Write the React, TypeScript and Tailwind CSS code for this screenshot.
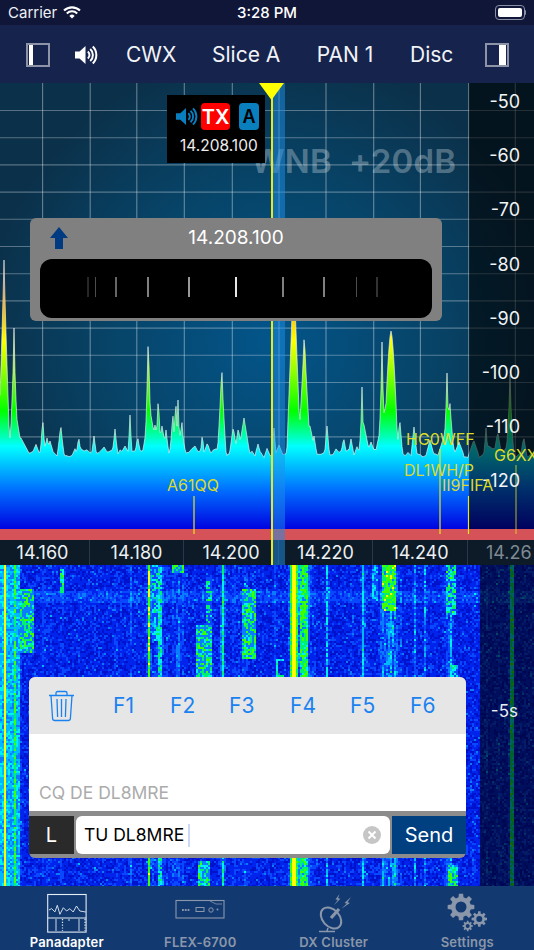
import React from "react";

const FONT = "font-['Inter','Liberation_Sans',sans-serif]";

function rng(seed: number) {
  let a = seed;
  return () => {
    a |= 0;
    a = (a + 0x6d2b79f5) | 0;
    let t = Math.imul(a ^ (a >>> 15), 1 | a);
    t = (t + Math.imul(t ^ (t >>> 7), 61 | t)) ^ t;
    return ((t ^ (t >>> 14)) >>> 0) / 4294967296;
  };
}

// x, top y, half width at the base, shape exponent
const PEAKS: number[][] = [
  [4, 260, 6, 0.9], [3, 395, 9, 1], [14, 328, 4.5, 0.7], [15, 405, 8, 0.9], [21, 438, 9, 1],
  [42.7, 417, 2.5, 0.9], [47, 438, 4, 1], [50, 441, 4, 1], [60.7, 423, 3.5, 0.8], [78.7, 437, 2.5, 1], [94, 436, 2.5, 1],
  [104, 447, 5, 1], [115, 429, 3, 0.9], [125, 446, 5, 1], [130, 415, 2, 0.9], [137.7, 437, 3, 1], [145.7, 432, 3, 1],
  [148.3, 323, 3.5, 0.7], [150, 410, 8, 1], [155, 425, 6, 1], [158.3, 394, 3, 0.8], [162, 426, 5, 1], [166, 430, 3, 1],
  [172.7, 393, 3.5, 0.4], [175.7, 388, 4, 0.5], [178, 400, 6, 0.4], [181.7, 406, 4.5, 0.4],
  [202.3, 434, 2, 1], [207.3, 443, 4, 1], [221.7, 358, 4.5, 0.7], [233.3, 427, 4, 1], [238.3, 428, 4, 1], [244, 418, 6, 1],
  [258, 444, 3, 1], [274, 428, 2, 1], [279, 445, 4, 1],
  [293.7, 270, 7, 1], [290, 377, 2.5, 1], [304.3, 329, 6.5, 0.8], [310, 426, 6, 1], [314, 436, 3, 1], [327, 426, 2.5, 1],
  [343.7, 438, 3, 1], [351, 439, 3, 1], [362, 387, 3, 0.6], [364, 425, 6, 1], [371, 442, 5, 1],
  [382, 342, 3.5, 0.7], [391, 331, 7, 1.6], [386, 405, 11, 1.1], [399.7, 419, 3, 1], [414, 427, 3, 1], [430, 440, 4, 1],
  [447, 373, 3.5, 0.7], [449.7, 397, 4.5, 0.8], [447, 427, 9, 1], [459, 442, 5, 1],
  [473.7, 440, 5, 1], [486, 428, 2, 1], [497.7, 432, 4, 1], [510, 375, 4, 0.65], [523.7, 437, 3, 1],
];

const R0 = rng(17);
const GRID: number[] = [];
for (let i = 0; i < 182; i++) {
  const j = R0();
  GRID.push(451 + Math.sin(i * 0.37) * 2 + R0() * 5 + (j > 0.8 ? 4 * R0() : 0) - (j < 0.15 ? 5 : 0));
}
const SPEC: number[] = [];
for (let x = 0; x <= 534; x++) {
  const i = Math.floor(x / 3);
  const f = x / 3 - i;
  let y = GRID[i] * (1 - f) + GRID[i + 1] * f;
  for (const [px, top, w, p] of PEAKS) {
    const d = Math.abs(x - px);
    if (d < w) y = Math.min(y, top + (455 - top) * Math.pow(d / w, p));
  }
  SPEC.push(y);
}
const specLine = SPEC.map((y, x) => `${x},${y.toFixed(1)}`).join(" L");

// [x0, x1, y0, y1, level, density]
const FEATURES: number[][] = [
  [4, 6, 565, 886, 1.02, 1], [14, 16, 565, 886, 0.8, 0.9],
  [20, 34, 588, 653, 0.76, 0.58],
  [148, 150, 565, 886, 0.88, 1], [153, 159, 565, 640, 0.65, 0.55], [159, 161, 565, 886, 0.65, 0.8],
  [172, 184, 565, 572, 0.78, 0.7], [61, 63, 568, 592, 0.72, 0.8],
  [206, 211, 578, 625, 0.72, 0.45], [197, 211, 625, 678, 0.74, 0.55],
  [198, 210, 860, 886, 0.74, 0.55],
  [222, 224, 565, 886, 0.7, 0.95],
  [243, 255, 588, 658, 0.76, 0.58],
  [276, 278, 659, 678, 0.65, 0.9], [276, 283, 659, 661, 0.65, 0.9], [276, 283, 675, 678, 0.65, 0.9],
  [291, 293, 565, 886, 0.8, 1], [293, 295, 565, 886, 1.02, 1], [295, 297, 565, 886, 0.8, 1],
  [301, 307, 565, 886, 0.78, 0.9],
  [327, 328, 565, 886, 0.6, 0.8], [362, 364, 565, 886, 0.6, 0.85], [373, 377, 565, 600, 0.58, 0.55],
  [383, 395, 565, 611, 0.82, 0.9], [414, 416, 565, 886, 0.55, 0.5], [424, 426, 565, 886, 0.55, 0.5],
  [446, 456, 565, 615, 0.72, 0.6], [450, 452, 615, 886, 0.6, 0.8], [450, 458, 665, 678, 0.62, 0.7],
  [448, 458, 865, 886, 0.75, 0.6],
  [511, 513, 565, 886, 0.72, 1],
];

const COLORS = ["#000aa8", "#0012cc", "#0024ec", "#0a48ff", "#0a7cff", "#00b8ff", "#00f0f0", "#00f070", "#40ff00", "#ffff00"];
const R1 = rng(91);
const runs: string[] = COLORS.map(() => "");
for (let yy = 0; yy < 321; yy += 2) {
  const Y = 565 + yy;
  let cur = -1;
  let start = 0;
  for (let x = 0; x <= 534; x += 2) {
    let idx = -1;
    if (x < 534) {
      let v = 0.13 + R1() * 0.2;
      const h = Math.min(1, Math.max(0, (449 - SPEC[x]) / 70));
      if (h > 0.05) {
        const t = Math.sin(Y * 0.13 + x * 1.7) + Math.sin(Y * 0.041 + x * 0.6);
        v += h * (t > -0.3 ? 0.3 : 0.08);
      }
      if (Y > 590 && Y < 602) v += 0.09;
      if (R1() < 0.05) v += 0.17;
      if (x < 20) v = Math.max(v, 0.42 + R1() * 0.24);
      for (const [x0, x1, y0, y1, lv, d] of FEATURES) {
        if (x >= x0 - 1 && x < x1 && Y >= y0 && Y < y1) v = Math.max(v, R1() < d ? lv + (R1() - 0.5) * 0.2 : lv * 0.55);
      }
      idx = Math.min(9, Math.floor(v * 10));
    }
    if (idx !== cur) {
      if (cur >= 0) runs[cur] += `M${start} ${yy}h${x - start}v2h-${x - start}z`;
      cur = idx;
      start = x;
    }
  }
}

function gear(cx: number, cy: number, ro: number, ri: number, hole: number, teeth: number) {
  const pts: string[] = [];
  for (let i = 0; i < teeth; i++) {
    const a = (i / teeth) * Math.PI * 2;
    const s = (Math.PI * 2) / teeth;
    const p = (r: number, t: number) => `${(cx + r * Math.cos(t)).toFixed(2)} ${(cy + r * Math.sin(t)).toFixed(2)}`;
    pts.push(p(ri, a - s * 0.32), p(ro, a - s * 0.2), p(ro, a + s * 0.2), p(ri, a + s * 0.32));
  }
  return `M${pts.join("L")}zM${cx + hole} ${cy}a${hole} ${hole} 0 1 0 ${-2 * hole} 0a${hole} ${hole} 0 1 0 ${2 * hole} 0z`;
}

function Speaker({ className }: { className: string }) {
  return (
    <svg viewBox="0 0 23 20" className={className} fill="none" stroke="currentColor">
      <path d="M0 6.5h4.5L10.5 1v18l-6-5.5H0z" fill="currentColor" stroke="none" />
      <path d="M12.8 6.5a4.5 4.5 0 0 1 0 7" strokeWidth="2" />
      <path d="M15.2 4a8 8 0 0 1 0 12" strokeWidth="2" />
      <path d="M17.8 1.5a12 12 0 0 1 0 17" strokeWidth="2" />
    </svg>
  );
}

function Spectrum() {
  const vlines = [42.6, 90.2, 136.8, 184.3, 232.3, 279, 326, 373.7, 420.4, 468.7, 515.3];
  const hlines = Array.from({ length: 14 }, (_, i) => 110.5 + 27.2 * i);
  return (
    <svg viewBox="0 83 534 457" className="absolute inset-0 w-full h-full">
      <defs>
        <radialGradient id="bg" gradientUnits="userSpaceOnUse" cx="270" cy="340" r="290">
          <stop offset="0" stopColor="#03558a" />
          <stop offset="0.55" stopColor="#074468" />
          <stop offset="1" stopColor="#0b3049" />
        </radialGradient>
        <linearGradient id="fill" gradientUnits="userSpaceOnUse" x1="0" y1="260" x2="0" y2="530">
          <stop offset="0" stopColor="#ff2a20" />
          <stop offset="0.14" stopColor="#ff9a00" />
          <stop offset="0.3" stopColor="#ffff00" />
          <stop offset="0.56" stopColor="#00ff00" />
          <stop offset="0.69" stopColor="#00ffff" />
          <stop offset="0.76" stopColor="#00c0ff" />
          <stop offset="0.85" stopColor="#0070ff" />
          <stop offset="1" stopColor="#0000e0" />
        </linearGradient>
      </defs>
      <rect x="0" y="83" width="534" height="457" fill="url(#bg)" />
      {vlines.map((x) => (
        <line key={x} x1={x} x2={x} y1="83" y2="530" stroke="#ffffff" strokeOpacity="0.38" strokeWidth="1.1" />
      ))}
      {hlines.map((y) => (
        <line key={y} x1="0" x2="534" y1={y} y2={y} stroke="#ffffff" strokeOpacity="0.32" strokeWidth="1.1" />
      ))}
      <path d={`M0,530 L${specLine} L534,530z`} fill="url(#fill)" />
      <path d={`M${specLine}`} fill="none" stroke="#e8f4f4" strokeOpacity="0.72" strokeWidth="0.9" />
      <rect x="0" y="529" width="534" height="11" fill="#d55358" />
      <rect x="469" y="83" width="65" height="446" fill="#000000" fillOpacity="0.58" />
      <g stroke="#e8e818" strokeWidth="1.2">
        <line x1="194" x2="194" y1="496" y2="534" />
        <line x1="440" x2="440" y1="449" y2="534" />
        <line x1="468.5" x2="468.5" y1="496" y2="534" />
        <line x1="516" x2="516" y1="465" y2="534" strokeOpacity="0.65" />
      </g>
    </svg>
  );
}

function Spot({ className, children }: { className: string; children: React.ReactNode }) {
  return <span className={`absolute text-[16px] leading-[18px] text-[#dcdc28] whitespace-nowrap ${className}`}>{children}</span>;
}

function Waterfall() {
  return (
    <svg viewBox="0 0 534 321" className="absolute inset-0 w-full h-full">
      <defs>
        <filter id="soft" x="0" y="0" width="100%" height="100%" colorInterpolationFilters="sRGB">
          <feGaussianBlur stdDeviation="0.5" />
        </filter>
      </defs>
      <rect x="0" y="0" width="534" height="321" fill="#0014d0" />
      <g filter="url(#soft)" shapeRendering="crispEdges">
        {runs.map((d, i) => (
          <path key={i} d={d} fill={COLORS[i]} />
        ))}
      </g>
      <rect x="480" y="0" width="54" height="321" fill="#000000" fillOpacity="0.6" />
    </svg>
  );
}

const TICKS = [
  [87, "opacity-15"], [94.5, "opacity-30"], [115, "opacity-40"], [147, "opacity-50"], [188, "opacity-60"],
  [235, "opacity-90"], [282, "opacity-50"], [323, "opacity-50"], [355.5, "opacity-30"], [376, "opacity-20"],
] as const;

export default function App() {
  return (
    <div className={`${FONT} relative flex h-[950px] w-[534px] flex-col overflow-hidden bg-black text-white`}>
      {/* status bar */}
      <div className="relative flex h-[25px] items-center bg-[#0f1638] pl-[8px] pr-[8px]">
        <span className="text-[15px] leading-none text-[#f0f0f4]">Carrier</span>
        <svg viewBox="0 0 18 13" className="ml-[6px] h-[13px] w-[18px]" fill="none" stroke="#fff" strokeWidth="2.1">
          <path d="M1 4.6a11.5 11.5 0 0 1 16 0" />
          <path d="M3.8 7.4a7.5 7.5 0 0 1 10.4 0" />
          <path d="M9 12.6l-2.6-2.7a3.7 3.7 0 0 1 5.2 0z" fill="#fff" stroke="none" />
        </svg>
        <span className="absolute left-0 right-0 text-center text-[15px] font-medium leading-none">3:28 PM</span>
        <div className="ml-auto flex items-center">
          <div className="flex h-[15px] w-[30px] items-center rounded-[4px] border border-[#8a8fa8] p-[2px]">
            <div className="h-full w-full rounded-[2px] bg-white" />
          </div>
          <div className="h-[5px] w-[1.5px] rounded-r bg-[#8a8fa8]" />
        </div>
      </div>

      {/* toolbar */}
      <div className="flex h-[58px] items-center bg-[#16234d] pt-[1px] text-[21px] text-[#f2f3f7]">
        <div className="ml-[26px] h-[24px] w-[24px] border-2 border-[#8d94a8] pl-[1px]">
          <div className="h-full w-[4px] bg-white" />
        </div>
        <Speaker className="ml-[25px] h-[20px] w-[23px] text-white" />
        <span className="ml-[28px] w-[50px] text-center">CWX</span>
        <span className="ml-[36px] w-[67px] whitespace-nowrap text-center">Slice A</span>
        <span className="ml-[37px] w-[58px] whitespace-nowrap text-center">PAN 1</span>
        <span className="ml-[36px] w-[43px] text-center">Disc</span>
        <div className="ml-[32px] flex h-[24px] w-[24px] justify-end border-2 border-[#8d94a8] pr-[1px]">
          <div className="h-full w-[7px] bg-white" />
        </div>
      </div>

      {/* panadapter + scale */}
      <div className="relative flex h-[482px] flex-col">
        <div className="relative h-[457px]">
          <Spectrum />
          <div className="absolute left-[251px] top-[60px] whitespace-nowrap text-[33px] font-semibold leading-[36px] tracking-[0.2px] text-white/30">
            WNB&nbsp; +20dB
          </div>
          <div className="absolute right-[14px] top-[-8px] flex flex-col items-end text-[18px] leading-[54.2px] text-[#f2f4f6]">
            {["-50", "-60", "-70", "-80", "-90", "-100", "-110", "-120"].map((t) => (
              <span key={t} className="h-[54.2px]">{t}</span>
            ))}
          </div>
          <Spot className="left-[167px] top-[393px]">A61QQ</Spot>
          <Spot className="left-[406px] top-[347px]">HG0WFF</Spot>
          <Spot className="left-[404px] top-[378px]">DL1WH/P</Spot>
          <Spot className="left-[442px] top-[393px]">II9FIFA</Spot>
          <Spot className="left-[494px] top-[363px]">G6XX</Spot>
        </div>
        <div className="flex h-[25px] items-center bg-[#0d1b29] text-[18px] text-[#eef1f3]">
          <div className="ml-[-4px] flex h-full w-[94px] items-center justify-center border-r border-[#26384a]">14.160</div>
          <div className="flex h-full w-[94px] items-center justify-center border-r border-[#26384a]">14.180</div>
          <div className="flex h-full w-[95px] items-center justify-center border-r border-[#26384a]">14.200</div>
          <div className="flex h-full w-[94px] items-center justify-center border-r border-[#26384a]">14.220</div>
          <div className="flex h-full w-[95px] items-center justify-center border-r border-[#26384a]">14.240</div>
          <div className="ml-[18px] whitespace-nowrap text-[#7f8a93]">14.26</div>
        </div>

        {/* slice marker */}
        <div className="absolute bottom-0 left-[272px] top-0 w-[13px] bg-[#1e90e8]/50" />
        <div className="absolute bottom-0 left-[271px] top-0 w-[1.5px] bg-[#e8e820]" />
        <svg viewBox="0 0 25 17" className="absolute left-[259px] top-0 h-[17px] w-[25px]">
          <path d="M0 0h25L12.5 17z" fill="#ffff00" />
        </svg>

        {/* slice flag */}
        <div className="absolute left-[167px] top-[12px] flex h-[68px] w-[98px] flex-col bg-black pl-[9px]">
          <div className="mt-[8px] flex items-center">
            <Speaker className="h-[21px] w-[22px] text-[#0a7fc0]" />
            <div className="ml-[3px] flex h-[27px] w-[29px] items-center justify-center rounded-[4px] bg-[#ff0000] text-[20px] font-semibold leading-none">TX</div>
            <div className="ml-[9px] flex h-[27px] w-[20px] items-center justify-center rounded-[4px] bg-[#0a7fbd] text-[18px] font-semibold leading-none text-black">A</div>
          </div>
          <div className="ml-[4px] mt-[7px] whitespace-nowrap text-[15.5px] leading-[18px] text-[#eeeeee]">14.208.100</div>
        </div>

        {/* tuner */}
        <div className="absolute left-[30px] top-[135px] flex h-[103px] w-[412px] flex-col rounded-[6px] bg-[#808080] px-[10px] pb-[3px]">
          <div className="relative flex h-[41px] items-center justify-center text-[19px] text-white">
            14.208.100
            <svg viewBox="0 0 18 22" className="absolute left-[10px] top-[9px] h-[22px] w-[18px]">
              <path d="M9 0l9 11h-5v11H5V11H0z" fill="#003a80" />
            </svg>
          </div>
          <div className="relative flex-1 rounded-[12px] bg-black">
            {TICKS.map(([x, o]) => (
              <div key={x} className={`absolute top-[18px] h-[20px] w-[1.5px] bg-white ${o}`} style={{ left: x - 40 }} />
            ))}
          </div>
        </div>
      </div>

      {/* waterfall */}
      <div className="relative h-[321px]">
        <Waterfall />
        <div className="absolute right-[16px] top-[136px] text-[17px] leading-[20px] text-[#e8edf2]">-5s</div>
        <div className="absolute left-[29px] top-[112px] flex h-[181px] w-[437px] flex-col overflow-hidden rounded-[6px] bg-[#8c8c8c]">
          <div className="relative flex h-[57px] items-center bg-[#e6e6e6] text-[21px] text-[#1a82f0]">
            <svg viewBox="0 0 27 32" className="ml-[19px] h-[32px] w-[27px]" fill="none" stroke="#1a82f0" strokeWidth="1.3">
              <path d="M1 5.5h25" />
              <path d="M8 5.5V3a1.5 1.5 0 0 1 1.5-1.5h8A1.5 1.5 0 0 1 19 3v2.5" />
              <path d="M3 5.5l1.6 23a2.2 2.2 0 0 0 2.2 2h13.4a2.2 2.2 0 0 0 2.2-2l1.6-23" />
              <path d="M9 9l.6 18M13.5 9v18M18 9l-.6 18" />
            </svg>
            <span className="absolute left-[84px]">F1</span>
            <span className="absolute left-[141px]">F2</span>
            <span className="absolute left-[200px]">F3</span>
            <span className="absolute left-[261px]">F4</span>
            <span className="absolute left-[321px]">F5</span>
            <span className="absolute left-[381px]">F6</span>
          </div>
          <div className="flex h-[77px] items-end whitespace-nowrap bg-white pb-[8px] pl-[10px] text-[17.5px] leading-[20px] text-[#ababab]">CQ DE DL8MRE</div>
          <div className="mt-[5px] flex h-[38px]">
            <div className="flex w-[45px] items-center justify-center bg-[#2a2a2a] text-[20px] text-white">L</div>
            <div className="ml-[2px] flex w-[314px] items-center rounded-[6px] bg-white pl-[8px] pr-[9px] text-[17.5px] text-black">
              TU DL8MRE
              <div className="ml-[4px] h-[23px] w-[2px] bg-[#cdd8f8]" />
              <svg viewBox="0 0 18 18" className="ml-auto h-[18px] w-[18px]">
                <circle cx="9" cy="9" r="9" fill="#c6c6c6" />
                <path d="M5.5 5.5l7 7M12.5 5.5l-7 7" stroke="#fff" strokeWidth="2" />
              </svg>
            </div>
            <div className="ml-[2px] flex flex-1 items-center justify-center bg-[#003f80] text-[20px] text-white">Send</div>
          </div>
        </div>
      </div>

      {/* tab bar */}
      <div className="grid h-[64px] grid-cols-4 bg-[#133a70] text-[13px] font-semibold leading-[16px] tracking-[0.2px] text-[#8a96aa]">
        <div className="flex flex-col items-center pt-[6px] text-white">
          <svg viewBox="0 0 50 42" className="h-[42px] w-[50px]" fill="none" stroke="#e4ecf6">
            <rect x="5.7" y="2.5" width="38.4" height="37.6" strokeWidth="1.1" />
            <path d="M5.7 26h38.4" strokeWidth="1.1" />
            <path d="M7 18l2.6-1.4 3.3 3.3 2.4-6.6 2.6 9 3.4-6.6 3.3 3.3 3.3-2.3 3.3 3.3 3.3-6 3.3 5 6 1" strokeWidth="0.9" />
            <path d="M14 27v12M27 27v2M37 27v12" strokeWidth="0.9" />
            <path d="M20.5 27v12M43 27v12" strokeWidth="1.2" strokeDasharray="1.2 1.6" />
          </svg>
          <span>Panadapter</span>
        </div>
        <div className="flex flex-col items-center pt-[6px]">
          <svg viewBox="0 0 50 42" className="h-[42px] w-[50px]" fill="none" stroke="#8a96aa">
            <rect x="1" y="8.5" width="48" height="17.5" strokeWidth="1.1" />
            <path d="M35 9l6 3h6" strokeWidth="0.8" />
            <path d="M7 18h8" strokeWidth="2" strokeDasharray="1.8 1" />
            <rect x="21" y="15.5" width="8" height="4" strokeWidth="1" />
            <circle cx="36" cy="18" r="2.2" strokeWidth="1" />
            <circle cx="42.5" cy="17.5" r="1" fill="#8a96aa" stroke="none" />
          </svg>
          <span>FLEX-6700</span>
        </div>
        <div className="flex flex-col items-center pt-[6px]">
          <svg viewBox="0 0 50 42" className="h-[42px] w-[50px]" fill="none" stroke="#8a96aa">
            <ellipse cx="22" cy="26" rx="8.5" ry="12" transform="rotate(-42 22 26)" strokeWidth="2" />
            <path d="M22 26l8-9" strokeWidth="3.2" />
            <path d="M19 36l-1 3M10 39.5h16" strokeWidth="1.5" />
            <path d="M30.5 2l-4 5.5 2.4.2-4 5.5 6.5-6.5-2.4-.4z" fill="#8a96aa" stroke="none" />
            <path d="M42 5l-6.5 6 2.4.6-5.9 5.4 8.9-6-2.4-.8z" fill="#8a96aa" stroke="none" />
          </svg>
          <span>DX Cluster</span>
        </div>
        <div className="flex flex-col items-center pt-[6px]">
          <svg viewBox="0 0 50 42" className="h-[42px] w-[50px]" fill="#8a96aa" fillRule="evenodd">
            <path d={gear(19, 15, 13.5, 10, 5.5, 8)} />
            <path d={gear(37.3, 27, 7.8, 5.6, 3, 8)} />
            <path d={gear(25.7, 34, 5.2, 3.8, 2, 8)} />
          </svg>
          <span>Settings</span>
        </div>
      </div>
    </div>
  );
}
